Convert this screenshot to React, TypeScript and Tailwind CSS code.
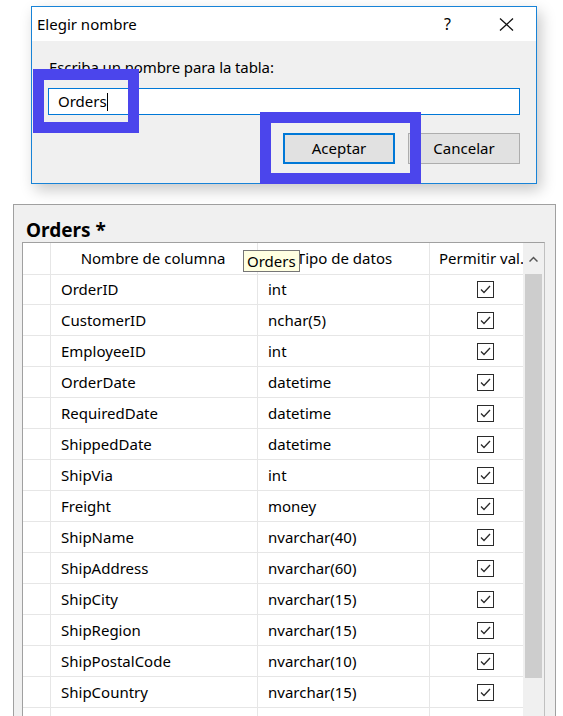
import React from 'react';

const rows = [
  ['OrderID', 'int'],
  ['CustomerID', 'nchar(5)'],
  ['EmployeeID', 'int'],
  ['OrderDate', 'datetime'],
  ['RequiredDate', 'datetime'],
  ['ShippedDate', 'datetime'],
  ['ShipVia', 'int'],
  ['Freight', 'money'],
  ['ShipName', 'nvarchar(40)'],
  ['ShipAddress', 'nvarchar(60)'],
  ['ShipCity', 'nvarchar(15)'],
  ['ShipRegion', 'nvarchar(15)'],
  ['ShipPostalCode', 'nvarchar(10)'],
  ['ShipCountry', 'nvarchar(15)'],
  ['', ''],
];

const CheckBox = () => (
  <div className="w-[17px] h-[17px] border border-[#2b2b2b] bg-white flex items-center justify-center">
    <svg width="13" height="13" viewBox="0 0 13 13">
      <path d="M2 6.5 L5 9.5 L11 3" fill="none" stroke="#2b2b2b" strokeWidth="1.3" />
    </svg>
  </div>
);

export default function App() {
  return (
    <div className="w-[563px] h-[716px] overflow-hidden bg-white text-black font-['Noto_Sans',sans-serif] text-[15px]">
      {/* dialog */}
      <div className="relative ml-[31px] mt-[6px] w-[506px] h-[178px] border border-[#1883d7] bg-[#f0f0f0] shadow-[4px_6px_14px_rgba(0,0,0,0.22)]">
        <div className="h-[34px] bg-white flex items-center pl-[5px] pr-[22px]">
          <span className="flex-1">Elegir nombre</span>
          <span className="mr-[48px] text-[16px]">?</span>
          <svg width="15" height="13" viewBox="0 0 15 13">
            <path d="M1 0.5 L14 12.5 M14 0.5 L1 12.5" stroke="#111" strokeWidth="1.3" fill="none" />
          </svg>
        </div>
        <div className="px-[16px] pt-[16px]">
          <div className="leading-[20px] pl-[1px] tracking-[-0.1px]">Escriba un nombre para la tabla:</div>
          <div className="mt-[11px] h-[27px] bg-white border border-[#0078d7] flex items-center pl-[9px]">
            <span>Orders</span>
            <span className="w-px h-[18px] bg-black" />
          </div>
          <div className="mt-[18px] flex justify-end gap-[13px]">
            <div className="w-[112px] h-[31px] bg-[#e1e1e1] border-2 border-[#0078d7] flex items-center justify-center">Aceptar</div>
            <div className="w-[112px] h-[31px] bg-[#e1e1e1] border border-[#adadad] flex items-center justify-center">Cancelar</div>
          </div>
        </div>
        {/* highlight boxes */}
        <div className="absolute left-[1px] top-[62px] w-[106px] h-[64px] border-[11px] border-[#4b45ec]" />
        <div className="absolute left-[228px] top-[105px] w-[161px] h-[72px] border-[11px] border-[#4b45ec]" />
      </div>

      {/* table designer */}
      <div className="ml-[13px] mt-[20px] w-[543px] h-[520px] border border-[#a0a0a0] bg-[#f0f0f0] pl-[8px] pr-[10px]">
        <div className="h-[37px] pt-[13px] pl-[4px] font-bold text-[19px] leading-[24px]">Orders *</div>
        <div className="relative flex border border-[#a0a0a0] border-r-[#c0c0c0] bg-white">
          <div className="grid grid-cols-[28px_207px_172px_93px] auto-rows-[31px]">
            <div className="border-r border-b border-[#e6e6e6] h-[32px]" />
            <div className="border-r border-b border-[#e6e6e6] h-[32px] flex items-center justify-center pr-[2px]">Nombre de columna</div>
            <div className="border-r border-b border-[#e6e6e6] h-[32px] flex items-center justify-center pl-[2px]">Tipo de datos</div>
            <div className="border-b border-[#e6e6e6] h-[32px] flex items-center pl-[9px] whitespace-nowrap overflow-hidden">Permitir val.</div>
            {rows.map(([name, type], i) => (
              <React.Fragment key={i}>
                <div className="border-r border-b border-[#e6e6e6]" />
                <div className="border-r border-b border-[#e6e6e6] flex items-center pl-[10px]">{name}</div>
                <div className="border-r border-b border-[#e6e6e6] flex items-center pl-[10px]">{type}</div>
                <div className="border-b border-[#e6e6e6] flex items-center justify-center pl-[17px]">
                  {name && <CheckBox />}
                </div>
              </React.Fragment>
            ))}
          </div>
          {/* scrollbar */}
          <div className="w-[21px] bg-[#f0f0f0] flex flex-col items-center">
            <div className="h-[31px] w-full flex items-center justify-center">
              <svg width="9" height="6" viewBox="0 0 9 6">
                <path d="M0.5 5.5 L4.5 1.5 L8.5 5.5" stroke="#555" strokeWidth="1.5" fill="none" />
              </svg>
            </div>
            <div className="w-[17px] h-[404px] bg-[#cdcdcd]" />
          </div>
          {/* tooltip */}
          <div className="absolute left-[220px] top-[7px] h-[22px] px-[3px] bg-[#ffffe1] border border-[#767676] flex items-center leading-none">Orders</div>
        </div>
      </div>
    </div>
  );
}
